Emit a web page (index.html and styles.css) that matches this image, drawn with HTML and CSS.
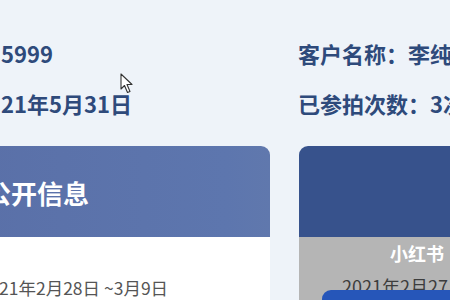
FILE: index.html
```html
<!DOCTYPE html>
<html lang="zh">
<head>
<meta charset="utf-8">
<link rel="stylesheet" href="styles.css">
</head>
<body>
<div class="page">
  <div class="info">
    <div class="col col-left">
      <div class="line">5999</div>
      <div class="line">21年5月31日</div>
    </div>
    <div class="col col-right">
      <div class="line">客户名称：李纯</div>
      <div class="line">已参拍次数：3次</div>
    </div>
  </div>
  <div class="cards">
    <div class="card card-left">
      <div class="card-head">公开信息</div>
      <div class="card-body">
        <div class="date">21年2月28日 ~3月9日</div>
      </div>
    </div>
    <div class="card card-right">
      <div class="card-head"></div>
      <div class="card-body">
        <div class="brand">小红书</div>
        <div class="date">2021年2月27日</div>
        <div class="btn"></div>
      </div>
    </div>
  </div>
  <svg class="cursor" width="14" height="22" viewBox="0 0 14 22">
    <path d="M1 1 L1 16 L4.5 12.5 L7.5 19.5 L10 18.5 L7 11.5 L12 11.5 Z" fill="#fff" stroke="#333" stroke-width="1.1" stroke-linejoin="round"/>
  </svg>
</div>
</body>
</html>
```

FILE: styles.css
```css
html, body {
  margin: 0;
  padding: 0;
}
body {
  background: #eef3f9;
  font-family: "Noto Sans CJK SC", "Noto Sans", sans-serif;
}
.page {
  position: relative;
  width: 450px;
  height: 300px;
  overflow: hidden;
}
.info {
  display: flex;
  padding-top: 42px;
  height: 146px;
  box-sizing: border-box;
}
.col {
  display: flex;
  flex-direction: column;
  gap: 28px;
  color: #2e4a7b;
  font-weight: bold;
  font-size: 22px;
  line-height: 22px;
  white-space: nowrap;
}
.col-left {
  width: 297px;
  padding-left: 1px;
  flex: none;
}
.cards {
  display: flex;
  gap: 29px;
  margin-left: -20px;
}
.card {
  flex: none;
  display: flex;
  flex-direction: column;
  height: 160px;
}
.card-left {
  width: 290px;
  background: #fff;
  border-radius: 0 9px 0 0;
}
.card-right {
  width: 200px;
  border-radius: 9px 9px 0 0;
  overflow: hidden;
}
.card-head {
  height: 91px;
  flex: none;
  display: flex;
  align-items: center;
  box-sizing: border-box;
}
.card-left .card-head {
  background: linear-gradient(90deg, #5a70a8, #5d76ae 85%, #6078ad);
  border-radius: 0 9px 0 0;
  color: #fff;
  font-weight: bold;
  font-size: 26px;
  padding-left: 5px;
  padding-top: 1px;
}
.card-right .card-head {
  background: #37528c;
}
.card-left .card-body {
  padding-top: 41px;
  padding-left: 19px;
}
.card-left .date {
  color: #555;
  font-size: 17.5px;
  line-height: 20px;
  white-space: nowrap;
}
.card-right .card-body {
  flex: 1;
  background: #b5b5b5;
  display: flex;
  flex-direction: column;
  position: relative;
}
.brand {
  color: #fff;
  font-weight: bold;
  font-size: 18px;
  line-height: 20px;
  margin-top: 6px;
  padding-left: 91px;
}
.card-right .date {
  color: #3d3d3d;
  font-size: 18px;
  line-height: 20px;
  margin-top: 13px;
  padding-left: 43px;
  white-space: nowrap;
}
.btn {
  position: absolute;
  left: 23px;
  top: 53px;
  width: 180px;
  height: 30px;
  background: #2656b9;
  border-radius: 9px;
}
.cursor {
  position: absolute;
  left: 120px;
  top: 73px;
}
```
